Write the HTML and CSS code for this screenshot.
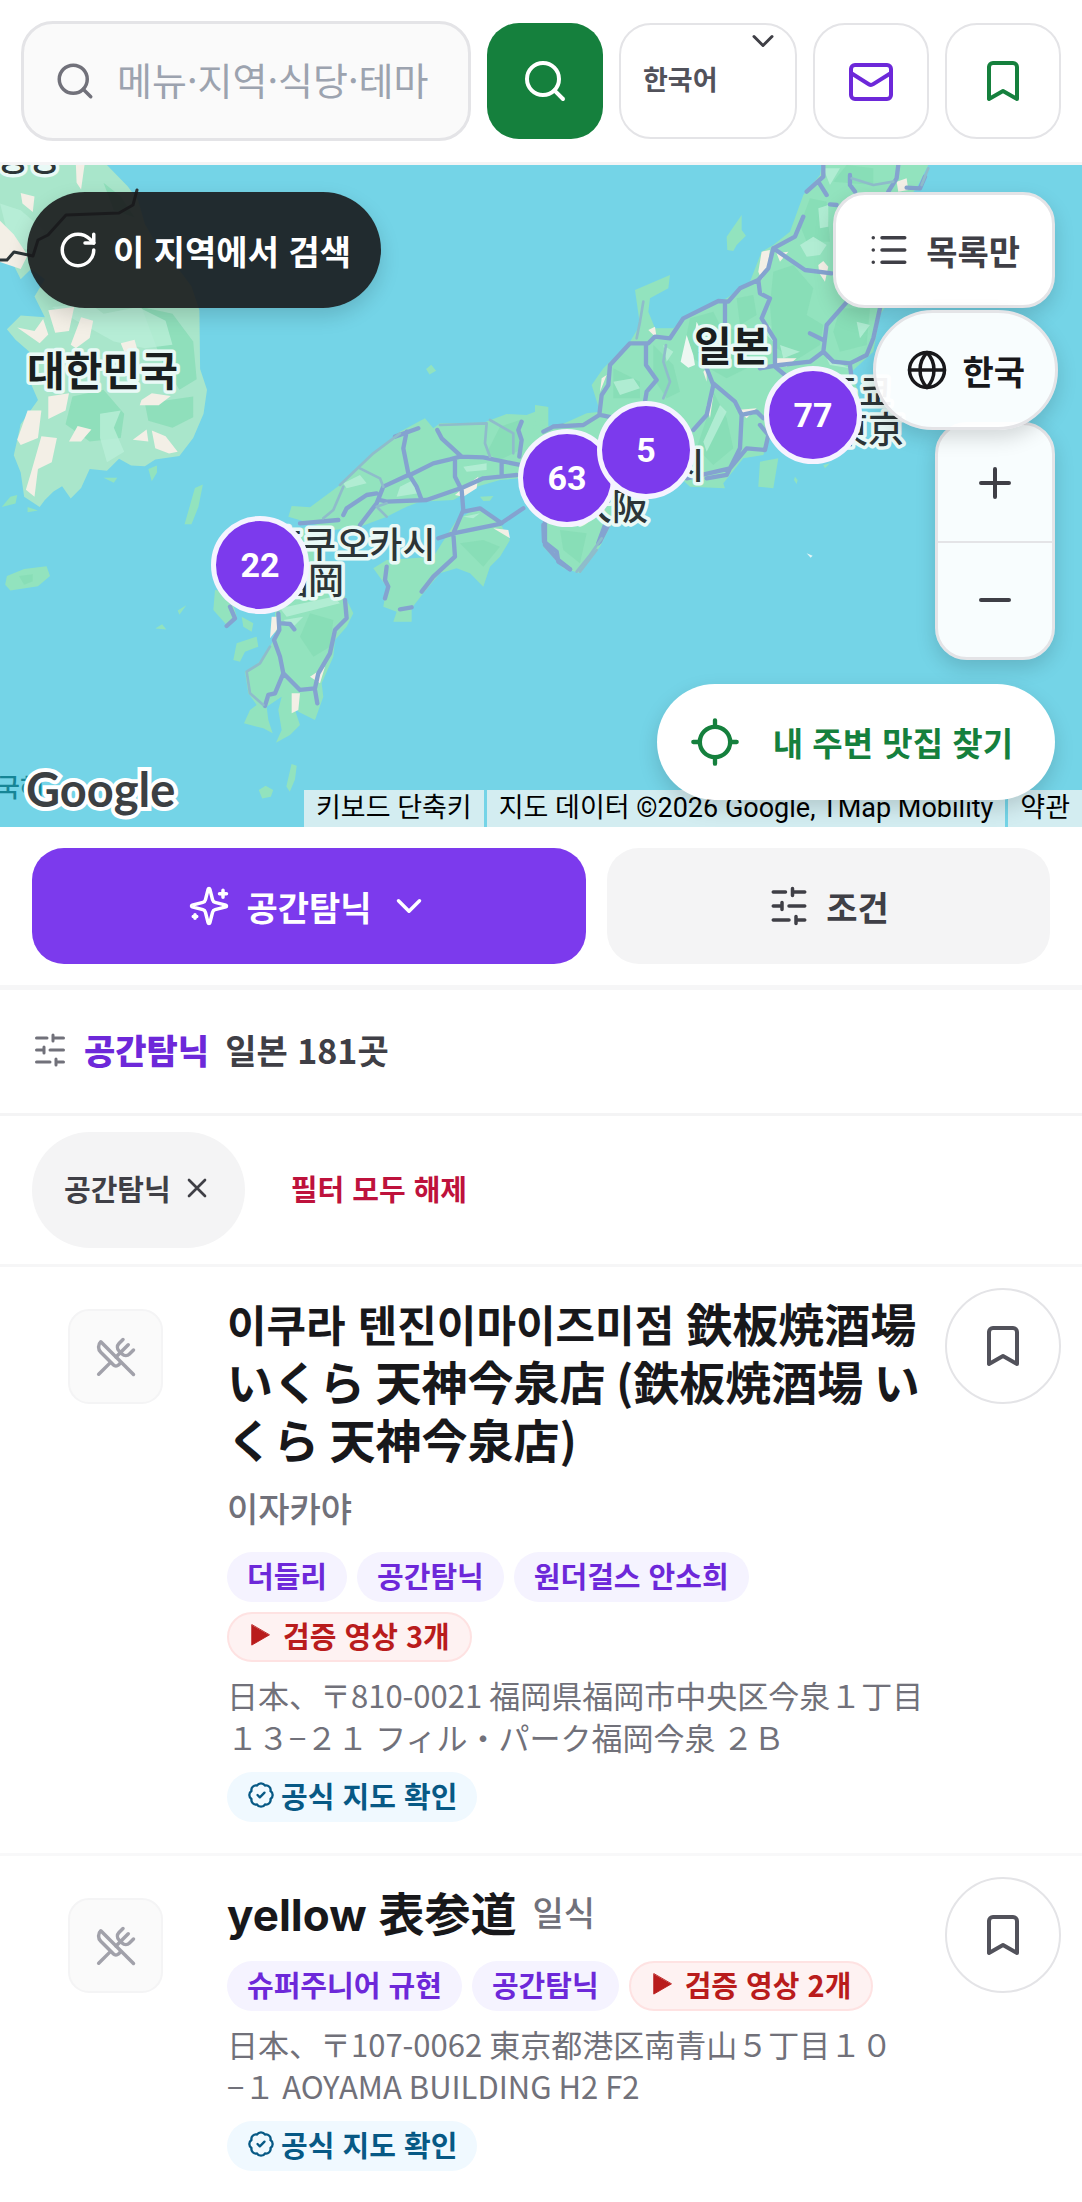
FILE: index.html
```
<!DOCTYPE html>
<html lang="ko">
<head>
    <meta charset="UTF-8">
    <meta name="viewport" content="width=device-width, initial-scale=1.0">
    <title>공간탐닉 - 일본 맛집 지도</title>
    <link rel="stylesheet" href="styles.css">
</head>
<body>
    <!-- shared icons -->
    <svg class="sprite" aria-hidden="true">
        <symbol id="i-search" viewBox="0 0 24 24"><circle cx="11" cy="11" r="8"/><path d="m21 21-4.3-4.3"/></symbol>
        <symbol id="i-bookmark" viewBox="0 0 24 24"><path d="m19 21-7-4-7 4V5a2 2 0 0 1 2-2h10a2 2 0 0 1 2 2z"/></symbol>
        <symbol id="i-chevron" viewBox="0 0 24 24"><path d="m6 9 6 6 6-6"/></symbol>
        <symbol id="i-sliders" viewBox="0 0 24 24"><path d="M21 4h-7M10 4H3M21 12h-9M8 12H3M21 20h-5M12 20H3M14 2v4M8 10v4M16 18v4"/></symbol>
        <symbol id="i-dish" viewBox="0 0 24 24"><path d="m16 2-2.3 2.3a3 3 0 0 0 0 4.2l1.8 1.8a3 3 0 0 0 4.2 0L22 8"/><path d="M15 15 3.3 3.3a4.2 4.2 0 0 0 0 6l7.3 7.3c.7.7 2 .7 2.8 0L15 15Zm0 0 7 7"/><path d="m2.1 21.8 6.4-6.3"/><path d="m19 5-7 7"/></symbol>
        <symbol id="i-check" viewBox="0 0 24 24"><path d="M3.85 8.62a4 4 0 0 1 4.78-4.77 4 4 0 0 1 6.74 0 4 4 0 0 1 4.78 4.78 4 4 0 0 1 0 6.74 4 4 0 0 1-4.77 4.78 4 4 0 0 1-6.75 0 4 4 0 0 1-4.78-4.77 4 4 0 0 1 0-6.76Z"/><path d="m9 12 2 2 4-4"/></symbol>
        <symbol id="i-play" viewBox="0 0 24 24"><path d="M3 1v22l19-11z" fill="currentColor" stroke-width="1"/></symbol>
    </svg>

    <header class="topbar">
        <form class="search-form">
            <label class="search-box">
                <svg class="icon icon-md"><use href="#i-search"/></svg>
                <input type="text" placeholder="메뉴·지역·식당·테마" aria-label="검색어">
            </label>
            <button type="submit" class="search-button" aria-label="검색"><svg class="icon icon-lg"><use href="#i-search"/></svg></button>
        </form>
        <div class="language">
            <select aria-label="언어">
                <option>한국어</option>
                <option>English</option>
                <option>日本語</option>
            </select>
            <svg class="icon language-arrow"><use href="#i-chevron"/></svg>
        </div>
        <button type="button" class="square-button mail" aria-label="문의">
            <svg class="icon icon-lg" viewBox="0 0 24 24"><rect x="2" y="4" width="20" height="17" rx="2"/><path d="m2 8 8.9 5.6a2 2 0 0 0 2.2 0L22 8"/></svg>
        </button>
        <button type="button" class="square-button saved" aria-label="저장한 곳"><svg class="icon icon-lg"><use href="#i-bookmark"/></svg></button>
    </header>

    <section class="map" aria-label="지도">
        <svg class="map-canvas" viewBox="0 0 1082 662" preserveAspectRatio="xMidYMid slice">
            <rect width="1082" height="662" fill="#74d4e7"/>

            <!-- korea -->
            <g transform="translate(0 135) scale(.345)">
                <path class="land-light" d="M0-391H310L370-330 400-290 420-220 460-150 510-100 555-40 578 30 580 200 600 260 590 330 560 400 520 452 450 462 420 482 380 480 345 460 310 495 260 490 235 545 205 575 180 540 155 555 130 580 115 600 70 570 60 500 40 450 60 360 110 290 80 220 85 150 45 115 20 85 60 45 130 50 100-10 130-60 90-90 60-60 30-120 0-130Z"/>
                <path class="land-shade" d="M300-340 350-300 390-240 330-260ZM410 20 500 40 560 120 570 230 520 260 470 180ZM210 280 300 260 360 330 350 400 260 410 190 360ZM420 300 560 280 560 340 500 370 430 350Z"/>
                <path class="land-pale" d="M150 20 260 10 300 40 400 20 480 60 500 130 420 140 330 120ZM290 330 350 320 330 370 360 440 310 470 290 400ZM0-280 60-260 130-200 100-140 30-160Z"/>
                <path class="sand" d="M220-391H245L235-320 222-340ZM60-310 100-300 95-255 65-280ZM0-230 40-190 80-130 60-90 0-110ZM140 30 215 20 200 90 160 95ZM235 50 270 60 260 110 220 140 205 130ZM50 80 100 90 125 55 140 100 115 125ZM140 280 200 270 190 320 140 345ZM80 320 120 320 110 400 60 420 50 405ZM120 395 165 400 150 470 110 490 100 570 75 550 90 500ZM200 410 225 365 265 375 235 410ZM385 405 425 375 430 410ZM440 378 480 395 515 440 490 445 450 430ZM410 290 440 270 495 278 460 305 405 305ZM350 125 390 115 400 150 360 150Z"/>
                <path class="land" d="M20 800 70 780 135 772 145 800 110 830 30 842 15 825ZM565 545 588 535 575 600 555 650 535 650ZM5 600 30 570 50 565 45 590ZM80 600 110 610 80 615ZM430 490 455 480 455 500 440 525ZM300 515 340 515 330 530ZM1235 200 1250 188 1264 205 1245 216ZM515 900 540 885 520 912ZM450 952 470 940 482 955ZM750 1420 770 1408 792 1420 785 1440 760 1445ZM845 1345 860 1350 855 1390 840 1425 830 1410Z"/>
                <path class="land-shade" d="M55 800 95 795 95 815 70 825Z"/>
            </g>
            <path class="border-line" d="M0 95h7l7-8 19 4 5-16 10-5 18-20 53-2 14-8 4-15"/>

            <!-- kyushu, chugoku, shikoku, kii -->
            <g transform="translate(200 235) scale(.3333)">
                <path class="land" d="M265 350 275 318 330 322 420 255 520 160 600 95 675 55 700 85 720 70 850 68 920 42 980 45 1045 20 1045 80 1200 60 1330-60 1330 290 1230 380 1200 440 1140 520 1090 505 1030 440 1030 350 960 235 900 240 830 260 760 300 660 305 620 320 560 350 480 380 400 390Z"/>
                <path class="land" d="M225 640 260 400 320 380 440 600 460 640 440 680 405 720 400 770 365 850 370 890 345 960 295 935 275 900 300 975 270 1005 228 1028 245 990 235 930 245 890 200 920 205 960 218 1000 190 985 132 970 150 930 170 915 145 880 135 815 175 790 210 740 225 710ZM45 570 90 575 110 650 80 675 40 630ZM100 780 110 730 170 710 175 740 135 755 120 785ZM125 650 160 670 155 695 130 680Z"/>
                <path class="land" d="M520 505 560 480 700 470 770 360 830 325 900 370 930 420 900 470 870 500 850 560 810 520 770 505 720 520 670 580 635 625 635 665 580 665 590 635 550 620 560 560ZM840 290 880 288 870 302 850 303Z"/>
                <path class="land-shade" d="M330 640 400 660 390 740 340 770 300 710ZM900 80 960 60 960 150 900 180 860 160ZM780 430 850 420 900 440 850 500ZM1080 390 1160 400 1140 490 1090 450Z"/>
                <path class="land-pale" d="M430 250 480 225 500 250 440 265ZM240 625 400 590 420 610 260 650ZM600 260 640 240 655 280 590 290ZM790 200 860 190 860 210 800 215ZM790 350 840 340 820 355ZM250 660 310 650 280 680Z"/>
                <path class="sand" d="M765 285 800 255 835 230 830 265 790 290ZM880 385 925 390 930 415ZM215 650 238 650 230 690 210 715ZM275 880 300 880 295 930 275 940ZM330 830 375 800 360 850Z"/>
                <path class="road" d="M585 110 655 85M620 95 610 145 625 220 650 260 665 300M625 225 550 260 530 310 480 375M430 345 440 325 500 285 530 280M540 300 560 305 680 300 790 262 850 235 950 225M630 225 700 190 750 178 780 170 850 172 960 195M712 90 725 115 785 170M765 180 765 230 785 270 790 330 760 400 765 470 700 530 665 575M715 415 760 400 900 372 970 325M790 335 840 325 905 370M300 370 415 360M560 500 555 540 565 560 555 595M600 628 635 622M235 640 238 690 222 720 240 770 250 820 300 870 345 865 355 820 390 760 405 690 440 655 435 600M245 670 270 672 283 688M250 820 225 880 205 885 195 918M345 870 352 910M90 620 105 655 80 678M965 65 955 90 965 120 958 170M905 185 905 225M1035 350 1035 435 1075 480 1110 508M1215 375 1195 430M1060 80 1150 70 1200 45 1215-5"/>
                <path class="road-thin" d="M420 255 520 160 600 100M480 205 540 235 550 260M430 260 400 330 370 355M720 75 860 70 855 130 870 170M870 60 940 100 940 160M210 740 180 790 140 815 150 880 190 915M560 310 530 320 560 350M1140 515 1190 450"/>
            </g>

            <!-- central and east honshu -->
            <g transform="translate(540 0) scale(.3333)">
                <path class="land" d="M-20 780 50 785 140 745 180 740 155 660 190 610 210 590 270 530 300 480 285 375 390 330 385 370 330 400 325 440 345 490 400 490 440 450 560 400 630 350 665 260 700 240 750 200 790 90 840 30 845 0H1165L1130 70 1085 120 1085 350 1020 450 1000 560 935 620 960 700 870 790 700 790 670 870 610 880 550 955 555 970 450 965 380 900 200 1000 150 1080 10 1050ZM560 215 605 150 605 195 618 212 590 240 580 258 562 255ZM660 890 715 880 700 970 655 965ZM765 935 773 945 770 957 762 945ZM850 900 870 895 855 910ZM-15 720 22 725 22 765-15 770Z"/>
                <path class="land-shade" d="M450 460 520 440 540 480 600 500 640 600 560 640 490 600 430 560ZM700 320 760 300 820 370 800 450 850 480 840 540 760 590 700 540 690 420ZM810 100 860 110 870 230 800 230 780 180ZM880 50 1000 60 1000 10 920 0ZM520 680 560 760 580 850 520 900 470 850 500 760ZM220 610 300 650 300 700 220 700ZM340 540 400 600 420 680 380 700 340 640ZM900 430 990 430 980 540 900 560 880 500ZM590 400 640 390 650 450 600 480Z"/>
                <path class="land-pale" d="M780 240 820 215 860 240 840 270 800 275ZM835 130 865 120 865 185 840 190ZM540 720 560 740 500 860 490 830ZM220 650 280 640 300 670 240 690ZM670 500 690 480 700 530ZM370 540 400 560 380 590ZM720 540 780 560 730 580ZM950 470 990 480 960 520ZM860 580 930 610 870 600ZM850 10 900 10 870 60Z"/>
                <path class="sand" d="M665 260 690 255 680 320 665 345 655 320ZM710 265 745 260 720 290ZM835 300 850 288 865 305 855 350 838 325ZM1070 50 1100 40 1105 75 1075 80ZM700 580 770 580 740 605 710 600ZM590 735 650 730 620 760ZM500 720 520 690 510 760ZM325 495 345 485 350 520ZM500 610 500 650 490 620ZM185 640 200 630 180 680Z"/>
                <path fill="#eef7f2" d="M440 510 460 570 465 600 445 608 422 590ZM470 470 485 500 465 500Z"/>
                <path class="road" d="M790 155 765 215 700 250 685 310 655 345 600 370 565 410 535 408 430 460 390 520 345 515 325 535 270 535 210 600 205 660 185 690 178 750 130 780 40 785 10 800M180 750 230 760M318 540 318 600 350 645 320 680 315 710M555 415 555 490M655 345 660 385 690 400 665 460 705 525 705 605 735 630M700 250 795 315 875 325M500 610 520 660 500 750 460 795M520 655 585 710 605 750 600 850 560 930 500 940M605 750 650 740 670 760M660 780 685 810 675 855 620 850 570 910 440 940M660 610 720 600 810 590 850 560 860 480 930 400M810 505 850 525M850 560 880 590 930 595 980 570 1000 520 1020 430M930 600 935 640M850 0 850 35 800 80M835 50 860 90M930 30 930 60 945 80M1075 0 1070 40 1045 80M1155 35 1140 70 1100 68M870 118 890 120M10 1080 12 1130 50 1160 55 1190 90 1213M205 1080 180 1130"/>
                <path class="road-thin" d="M378 540 370 590 390 650 370 700M290 520 300 470 310 410M1165 10 1145 60M110 1220 150 1170 185 1120M935 40 1000 60 1060 50"/>
                <path fill="#e4f6f6" d="M800 1165 818 1172 812 1178Z"/>
            </g>

            <g class="map-labels">
                <text class="country" x="27" y="221">대한민국</text>
                <text class="country" x="694" y="196">일본</text>
                <text x="-5" y="6">평양</text>
                <text x="270" y="393">후쿠오카시</text>
                <text x="272" y="429">福岡</text>
                <text x="572" y="314">나고야시</text>
                <text x="576" y="355">大阪</text>
                <text x="826" y="241">도쿄</text>
                <text x="832" y="278">東京</text>
                <text class="sea" x="-4" y="632">국해</text>
            </g>
        </svg>

        <button type="button" class="marker marker-osaka">63</button>
        <button type="button" class="marker marker-nagoya">5</button>
        <button type="button" class="marker marker-tokyo">77</button>
        <button type="button" class="marker marker-fukuoka">22</button>

        <span class="map-logo">Google</span>
        <div class="map-credits">
            <button type="button">키보드 단축키</button>
            <span>지도 데이터 ©2026 Google, TMap Mobility</span>
            <a href="#">약관</a>
        </div>

        <button type="button" class="map-button search-area">
            <svg class="icon icon-md" viewBox="0 0 24 24"><path d="M21 12a9 9 0 1 1-9-9c2.52 0 4.93 1 6.74 2.74L21 8"/><path d="M21 3v5h-5"/></svg>
            이 지역에서 검색
        </button>
        <button type="button" class="map-button list-only">
            <svg class="icon icon-md" viewBox="0 0 24 24"><path d="M3 5h.01M3 12h.01M3 19h.01M8 5h13M8 12h13M8 19h13"/></svg>
            목록만
        </button>
        <div class="zoom-control">
            <button type="button" aria-label="확대"><svg class="icon icon-lg" viewBox="0 0 24 24"><path d="M5 12h14M12 5v14"/></svg></button>
            <button type="button" aria-label="축소"><svg class="icon icon-lg" viewBox="0 0 24 24"><path d="M5 12h14"/></svg></button>
        </div>
        <button type="button" class="map-button country-switch">
            <svg class="icon icon-md" viewBox="0 0 24 24"><circle cx="12" cy="12" r="10"/><path d="M12 2a14.5 14.5 0 0 0 0 20 14.5 14.5 0 0 0 0-20M2 12h20"/></svg>
            한국
        </button>
        <button type="button" class="map-button nearby">
            <svg class="icon" viewBox="0 0 24 24"><path d="M2 12h3M19 12h3M12 2v3M12 19v3"/><circle cx="12" cy="12" r="7"/></svg>
            내 주변 맛집 찾기
        </button>
    </section>

    <nav class="filters">
        <button type="button" class="filter-theme">
            <svg class="icon icon-md" viewBox="0 0 24 24"><path d="M9.937 15.5A2 2 0 0 0 8.5 14.063l-6.135-1.582a.5.5 0 0 1 0-.962L8.5 9.936A2 2 0 0 0 9.937 8.5l1.582-6.135a.5.5 0 0 1 .963 0L14.063 8.5A2 2 0 0 0 15.5 9.937l6.135 1.581a.5.5 0 0 1 0 .964L15.5 14.063a2 2 0 0 0-1.437 1.437l-1.582 6.135a.5.5 0 0 1-.963 0zM20 3v4M22 5h-4M4 17v2M5 18H3"/></svg>
            공간탐닉
            <svg class="icon icon-md"><use href="#i-chevron"/></svg>
        </button>
        <button type="button" class="filter-options"><svg class="icon icon-md"><use href="#i-sliders"/></svg>조건</button>
    </nav>

    <div class="summary">
        <svg class="icon"><use href="#i-sliders"/></svg>
        <strong>공간탐닉</strong>
        <span>일본 181곳</span>
    </div>

    <div class="active-filters">
        <button type="button" class="chip">공간탐닉<svg class="icon icon-sm" viewBox="0 0 24 24"><path d="M18 6 6 18M6 6l12 12"/></svg></button>
        <button type="button" class="clear-filters">필터 모두 해제</button>
    </div>

    <main>
        <article class="place">
            <div class="thumb"><svg class="icon icon-md"><use href="#i-dish"/></svg></div>
            <div class="place-body">
                <div class="place-head">
                    <h2>이쿠라 텐진이마이즈미점 <span lang="ja">鉄板焼酒場 いくら 天神今泉店 (鉄板焼酒場 いくら 天神今泉店)</span></h2>
                    <span class="category">이자카야</span>
                </div>
                <div class="tags">
                    <span class="tag">더들리</span>
                    <span class="tag">공간탐닉</span>
                    <span class="tag">원더걸스 안소희</span>
                    <span class="tag tag-video"><svg class="icon"><use href="#i-play"/></svg>검증 영상 3개</span>
                </div>
                <p class="address" lang="ja">日本、〒810-0021 福岡県福岡市中央区今泉１丁目１３−２１ フィル・パーク福岡今泉 ２Ｂ</p>
                <span class="tag tag-official"><svg class="icon"><use href="#i-check"/></svg>공식 지도 확인</span>
            </div>
            <button type="button" class="save" aria-label="저장"><svg class="icon icon-lg"><use href="#i-bookmark"/></svg></button>
        </article>

        <article class="place">
            <div class="thumb"><svg class="icon icon-md"><use href="#i-dish"/></svg></div>
            <div class="place-body">
                <div class="place-head">
                    <h2><span class="latin">yellow</span> <span lang="ja">表参道</span></h2>
                    <span class="category">일식</span>
                </div>
                <div class="tags">
                    <span class="tag">슈퍼주니어 규현</span>
                    <span class="tag">공간탐닉</span>
                    <span class="tag tag-video"><svg class="icon"><use href="#i-play"/></svg>검증 영상 2개</span>
                </div>
                <p class="address" lang="ja">日本、〒107-0062 東京都港区南青山５丁目１０−１ AOYAMA BUILDING H2 F2</p>
                <span class="tag tag-official"><svg class="icon"><use href="#i-check"/></svg>공식 지도 확인</span>
            </div>
            <button type="button" class="save" aria-label="저장"><svg class="icon icon-lg"><use href="#i-bookmark"/></svg></button>
        </article>
    </main>
</body>
</html>
```
FILE: styles.css
```
* {
    box-sizing: border-box;
}
body {
    margin: 0;
    font-family: "Noto Sans CJK KR", "Noto Sans CJK JP", sans-serif;
    font-size: 34px;
    color: #3f3f46;
    background-color: #fff;
}
button,
input,
select {
    font: inherit;
    color: inherit;
}
button {
    display: flex;
    align-items: center;
    justify-content: center;
    padding: 0;
    border: none;
    background: none;
    font-weight: bold;
    cursor: pointer;
}
[lang="ja"] {
    font-family: "Noto Sans CJK JP", sans-serif;
}
.sprite {
    position: absolute;
    width: 0;
    height: 0;
}
.icon {
    flex: none;
    width: 36px;
    height: 36px;
    fill: none;
    stroke: currentColor;
    stroke-width: 2;
    stroke-linecap: round;
    stroke-linejoin: round;
}
.icon-sm {
    width: 32px;
    height: 32px;
}
.icon-md {
    width: 42px;
    height: 42px;
}
.icon-lg {
    width: 48px;
    height: 48px;
}

/* top bar */
.topbar {
    display: flex;
    align-items: center;
    gap: 16px;
    padding: 21px;
    border-bottom: 3px solid #f4f4f5;
}
.search-form {
    display: flex;
    flex: 1;
    align-items: center;
    gap: 16px;
    min-width: 0;
}
.search-box {
    display: flex;
    flex: 1;
    align-items: center;
    gap: 21px;
    min-width: 0;
    height: 120px;
    padding: 0 16px 0 30px;
    border: 3px solid #e4e4e7;
    border-radius: 32px;
    background-color: #fafafa;
    color: #71717a;
}
.search-box input {
    flex: 1;
    min-width: 0;
    padding: 0 0 6px;
    border: none;
    outline: none;
    background: none;
    font-size: 38px;
    color: #27272a;
}
.search-box input::placeholder {
    color: #9ca3af;
}
.search-button,
.square-button {
    flex: none;
    width: 116px;
    height: 116px;
    border-radius: 32px;
}
.search-button {
    background-color: #15803d;
    color: #fff;
}
.square-button {
    border: 2px solid #e4e4e7;
}
.mail {
    color: #6d28d9;
}
.saved {
    color: #15803d;
}
.language {
    position: relative;
}
.language select {
    appearance: none;
    display: block;
    width: 178px;
    height: 116px;
    padding: 0 22px 6px;
    border: 2px solid #e4e4e7;
    border-radius: 32px;
    background-color: #fff;
    font-size: 27px;
    font-weight: bold;
    color: #52525b;
}
.language-arrow {
    position: absolute;
    top: 0;
    right: 16px;
    pointer-events: none;
}

/* map */
.map {
    position: relative;
    height: 662px;
    overflow: hidden;
    background-color: #74d4e7;
}
.map-canvas {
    display: block;
    width: 100%;
    height: 100%;
}
.land {
    fill: #92e3be;
}
.land-light {
    fill: #a9e6cb;
}
.land-shade {
    fill: #84dcb4;
    opacity: 0.7;
}
.land-pale {
    fill: #b9efd8;
    opacity: 0.8;
}
.sand {
    fill: #f3efe6;
}
.road,
.road-thin,
.border-line {
    fill: none;
    stroke-linejoin: round;
    stroke-linecap: round;
}
.road {
    stroke: #84a3d0;
    stroke-width: 13;
}
.road-thin {
    stroke: #8fbccb;
    stroke-width: 8;
}
.border-line {
    stroke: #2c3537;
    stroke-width: 3;
}
.map-labels text {
    font-size: 36px;
    font-weight: 500;
    fill: #2c3537;
    stroke: #e9f9f6;
    stroke-width: 7;
    stroke-linejoin: round;
    paint-order: stroke;
}
.map-labels .country {
    font-size: 41px;
    font-weight: bold;
    fill: #1a1f20;
}
.map-labels .sea {
    font-size: 26px;
    fill: #168596;
    stroke: none;
}
.marker {
    position: absolute;
    width: 98px;
    height: 98px;
    border: 5px solid #f5f3ff;
    border-radius: 50%;
    background-color: #7c3aed;
    font-family: Roboto, sans-serif;
    color: #fff;
}
.marker-fukuoka {
    left: 211px;
    top: 351px;
}
.marker-osaka {
    left: 518px;
    top: 264px;
}
.marker-nagoya {
    left: 597px;
    top: 236px;
}
.marker-tokyo {
    left: 764px;
    top: 201px;
}
.map-logo {
    position: absolute;
    left: 26px;
    bottom: 10px;
    font-family: Lato, sans-serif;
    font-size: 47px;
    font-weight: bold;
    line-height: 56px;
    color: #3c4043;
    -webkit-text-stroke: 8px #fff;
    paint-order: stroke fill;
}
.map-credits {
    position: absolute;
    right: 0;
    bottom: 0;
    display: flex;
    gap: 3px;
    font-family: Roboto, "Noto Sans CJK KR", sans-serif;
    font-size: 27px;
    line-height: 37px;
    color: #000;
}
.map-credits > * {
    padding: 0 12px;
    background-color: rgba(235, 243, 244, 0.8);
    font-weight: normal;
    color: inherit;
    text-decoration: none;
}
.map-button {
    position: absolute;
    gap: 16px;
    height: 116px;
    padding: 0 32px;
    border-radius: 60px;
    background-color: #fff;
    box-shadow: 0 8px 20px rgba(0, 0, 0, 0.15);
    white-space: nowrap;
}
.search-area {
    left: 27px;
    top: 27px;
    gap: 14px;
    padding: 0 30px;
    background-color: rgba(24, 24, 27, 0.9);
    color: #fff;
}
.list-only {
    right: 27px;
    top: 27px;
    border: 3px solid #e4e4e7;
    border-radius: 32px;
}
.country-switch {
    right: 24px;
    top: 145px;
    gap: 14px;
    height: 120px;
    padding: 0 30px;
    border: 3px solid #e4e4e7;
    background-color: rgba(255, 255, 255, 0.95);
    color: #18181b;
}
.nearby {
    right: 27px;
    bottom: 27px;
    gap: 32px;
    padding: 0 42px 0 32px;
    font-size: 33px;
    color: #15803d;
}
.nearby .icon {
    width: 52px;
    height: 52px;
}
.zoom-control {
    position: absolute;
    right: 27px;
    top: 257px;
    width: 120px;
    overflow: hidden;
    border: 3px solid #e4e4e7;
    border-radius: 32px;
    background-color: rgba(255, 255, 255, 0.95);
    box-shadow: 0 8px 20px rgba(0, 0, 0, 0.15);
}
.zoom-control button {
    width: 100%;
    height: 116px;
}
.zoom-control button + button {
    border-top: 2px solid #e4e4e7;
}

/* filters */
.filters {
    display: grid;
    grid-template-columns: 5fr 4fr;
    gap: 21px;
    padding: 21px 32px;
    border-bottom: 5px solid #f6f6f7;
}
.filters button {
    gap: 16px;
    height: 116px;
    border-radius: 32px;
}
.filter-theme {
    background-color: #7c3aed;
    color: #fff;
}
.filter-options {
    background-color: #f4f4f5;
}
.summary {
    display: flex;
    align-items: center;
    gap: 16px;
    height: 126px;
    padding: 0 32px 4px;
    border-bottom: 3px solid #f4f4f5;
    font-weight: bold;
}
.summary .icon {
    color: #71717a;
}
.summary strong {
    color: #6d28d9;
}
.active-filters {
    display: flex;
    gap: 32px;
    padding: 16px 32px;
    border-bottom: 3px solid #f6f6f7;
    font-size: 29px;
}
.active-filters button {
    height: 116px;
    padding-bottom: 4px;
}
.active-filters .chip {
    gap: 10px;
    padding: 0 32px 4px;
    border-radius: 60px;
    background-color: #f4f4f5;
}
.active-filters .clear-filters {
    padding: 0 14px 4px;
    color: #be123c;
}

/* results */
.place {
    display: flex;
    align-items: flex-start;
    padding: 0 21px 0 68px;
    border-bottom: 3px solid #f8f8f9;
}
.thumb {
    display: flex;
    align-items: center;
    justify-content: center;
    flex: none;
    width: 95px;
    height: 95px;
    margin-top: 42px;
    border: 2px solid #f4f4f5;
    border-radius: 21px;
    background-color: #fafafa;
    color: #a1a1aa;
}
.place-body {
    display: flex;
    flex: 1;
    flex-direction: column;
    align-items: flex-start;
    min-width: 0;
    margin: 0 21px 0 64px;
    padding: 27px 0 31px;
}
.place-head {
    display: flex;
    flex-wrap: wrap;
    align-items: center;
    gap: 16px;
    margin-bottom: 20px;
}
.place h2 {
    margin: 0;
    font-size: 43px;
    line-height: 58px;
    color: #18181b;
}
.place h2 [lang="ja"] {
    font-size: 46px;
    line-height: 46px;
}
.place h2 .latin {
    font-family: Inter, sans-serif;
    font-size: 44px;
    line-height: 46px;
}
.category {
    font-weight: 500;
    line-height: 48px;
    color: #71717a;
}
.tags {
    display: flex;
    flex-wrap: wrap;
    gap: 10px;
}
.tag {
    display: inline-flex;
    align-items: center;
    height: 50px;
    padding: 0 20px 4px;
    border-radius: 25px;
    background-color: #f5f3ff;
    font-size: 29px;
    font-weight: bold;
    color: #6d28d9;
}
.tag-video {
    gap: 12px;
    border: 2px solid #fee2e2;
    background-color: #fef2f2;
    color: #b91c1c;
}
.tag-video .icon {
    width: 22px;
    height: 22px;
}
.tag-official {
    gap: 6px;
    background-color: #f0f9ff;
    color: #075985;
}
.tag-official .icon {
    width: 28px;
    height: 28px;
}
.address {
    margin: 12px 0 14px;
    font-size: 31px;
    line-height: 42px;
    color: #71717a;
}
.save {
    flex: none;
    width: 116px;
    height: 116px;
    margin-top: 21px;
    border: 2px solid #e4e4e7;
    border-radius: 50%;
    color: #52525b;
}
```
